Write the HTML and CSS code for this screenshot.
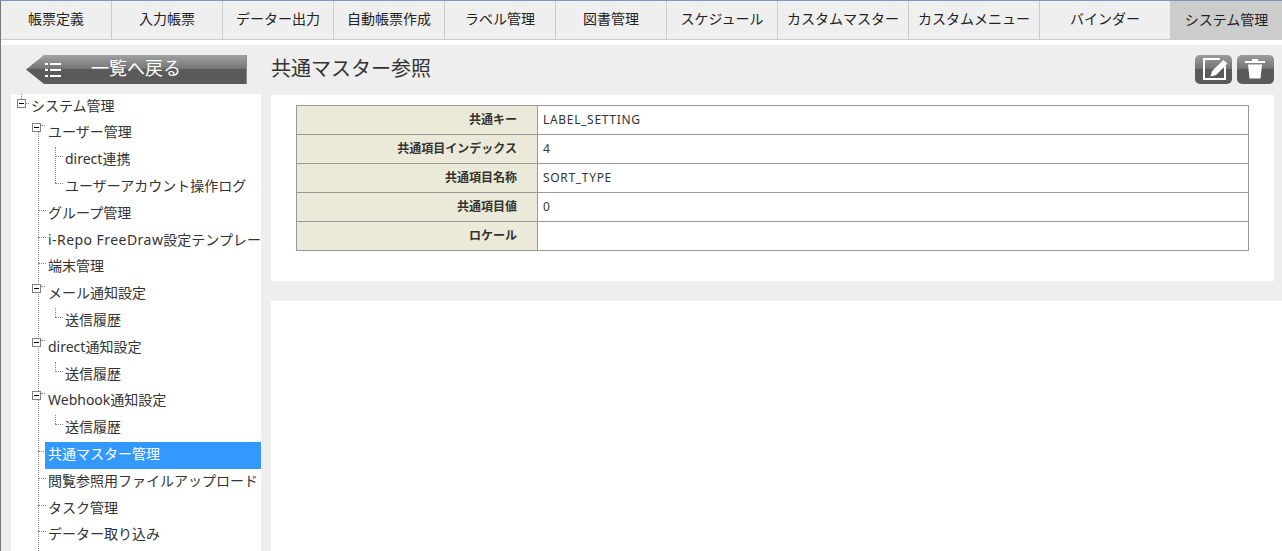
FILE: index.html
```html
<!DOCTYPE html>
<html lang="ja">
<head>
<meta charset="utf-8">
<title>共通マスター参照</title>
<link rel="stylesheet" href="styles.css">
</head>
<body>
<div class="app">
  <nav class="tabs">
    <a class="tab">帳票定義</a>
    <a class="tab">入力帳票</a>
    <a class="tab">データー出力</a>
    <a class="tab">自動帳票作成</a>
    <a class="tab">ラベル管理</a>
    <a class="tab">図書管理</a>
    <a class="tab">スケジュール</a>
    <a class="tab tab-wide">カスタムマスター</a>
    <a class="tab tab-wide">カスタムメニュー</a>
    <a class="tab tab-wide">バインダー</a>
    <a class="tab tab-active">システム管理</a>
  </nav>
  <div class="white-gap"></div>
  <div class="workspace">
    <aside class="left">
      <a class="back">
        <svg class="back-icon" width="16" height="16" viewBox="0 0 16 16">
          <path d="M0 1h3v2H0zM5 1h11v2H5zM0 7h3v2H0zM5 7h11v2H5zM0 13h3v2H0zM5 13h11v2H5z" fill="#fff"/>
        </svg>
        <span class="back-label">一覧へ戻る</span>
      </a>
      <div class="sidebar">
        <ul class="tree tree-root">
          <li class="node node-root">
            <span class="toggle"></span>
            <a class="row">システム管理</a>
            <ul class="tree tree-l1">
              <li class="node node-open">
                <span class="toggle"></span>
                <a class="row">ユーザー管理</a>
                <ul class="tree tree-l2">
                  <li class="node"><a class="row">direct連携</a></li>
                  <li class="node"><a class="row">ユーザーアカウント操作ログ</a></li>
                </ul>
              </li>
              <li class="node"><a class="row">グループ管理</a></li>
              <li class="node"><a class="row"><span class="latin">i-Repo FreeDraw</span>設定テンプレー</a></li>
              <li class="node"><a class="row">端末管理</a></li>
              <li class="node node-open">
                <span class="toggle"></span>
                <a class="row">メール通知設定</a>
                <ul class="tree tree-l2">
                  <li class="node"><a class="row">送信履歴</a></li>
                </ul>
              </li>
              <li class="node node-open">
                <span class="toggle"></span>
                <a class="row">direct通知設定</a>
                <ul class="tree tree-l2">
                  <li class="node"><a class="row">送信履歴</a></li>
                </ul>
              </li>
              <li class="node node-open">
                <span class="toggle"></span>
                <a class="row">Webhook通知設定</a>
                <ul class="tree tree-l2">
                  <li class="node"><a class="row">送信履歴</a></li>
                </ul>
              </li>
              <li class="node"><a class="row row-selected">共通マスター管理</a></li>
              <li class="node"><a class="row">閲覧参照用ファイルアップロード</a></li>
              <li class="node"><a class="row">タスク管理</a></li>
              <li class="node"><a class="row">データー取り込み</a></li>
            </ul>
          </li>
        </ul>
      </div>
    </aside>
    <main class="right">
      <header class="head">
        <h1 class="title">共通マスター参照</h1>
        <div class="actions">
          <button class="action" type="button" aria-label="編集">
            <svg width="37" height="29" viewBox="0 0 37 29">
              <path d="M30 11V24H9V4h16" fill="none" stroke="#fff" stroke-width="2"/>
              <path d="M15.500 21.500l1.500-5.500L28.500 5l4 3.500L21 20z" fill="#fff"/>
            </svg>
          </button>
          <button class="action" type="button" aria-label="削除">
            <svg width="37" height="29" viewBox="0 0 37 29">
              <path d="M15 4h6v2h7v2H8V6h7zM11 9.500h14L23.500 23.500h-11z" fill="#fff"/>
            </svg>
          </button>
        </div>
      </header>
      <section class="panel">
        <table class="detail">
          <tr><th>共通キー</th><td>LABEL_SETTING</td></tr>
          <tr><th>共通項目インデックス</th><td>4</td></tr>
          <tr><th>共通項目名称</th><td>SORT_TYPE</td></tr>
          <tr><th>共通項目値</th><td>0</td></tr>
          <tr><th>ロケール</th><td></td></tr>
        </table>
      </section>
      <section class="lower"></section>
    </main>
  </div>
</div>
</body>
</html>
```
FILE: styles.css
```css
* { box-sizing: border-box; }
html, body { margin: 0; padding: 0; height: 100%; overflow: hidden; background: #fff; }
body { font-family: "Noto Sans", "Noto Sans CJK JP", sans-serif; color: #333; }
a { color: inherit; text-decoration: none; }

.app {
  height: 551px;
  display: flex;
  flex-direction: column;
  border-left: 1px solid #777;
  border-top: 1px solid #7f95c2;
}

/* top tabs */
.tabs { display: flex; height: 39px; flex: none; background: #efefef; }
.tab {
  width: 111px;
  flex: none;
  display: flex;
  align-items: center;
  justify-content: center;
  font-size: 14px;
  color: #222;
  padding-bottom: 4px;
  border-right: 1px solid #ccc;
  border-bottom: 1px solid #ccc;
  white-space: nowrap;
}
.tab-wide { width: 131px; }
.tab-active { flex: 1; background: #ccc; border: 0; padding-bottom: 3px; }
.white-gap { height: 5px; flex: none; }

.workspace { flex: 1; min-height: 0; display: flex; background: #eee; }

/* left column */
.left { width: 260px; margin-left: 10px; flex: none; display: flex; flex-direction: column; padding-top: 10px; }
.back {
  width: 221px;
  height: 29px;
  margin-left: 15px;
  flex: none;
  display: flex;
  align-items: center;
  color: #fff;
  background: linear-gradient(#a2a2a2 0, #727272 50%, #5a5a5a 50%, #5a5a5a 100%);
  border-right: 1px solid #8a8a8a;
  clip-path: polygon(0 50%, 18px 0, 100% 0, 100% 100%, 18px 100%);
}
.back-icon { margin-left: 19px; flex: none; }
.back-label { margin-left: 30px; font-size: 18px; line-height: 29px; position: relative; top: -1px; }
.sidebar {
  margin-top: 10px;
  width: 250px;
  flex: 1;
  min-height: 0;
  background: #fff;
  overflow: hidden;
}

/* tree */
.tree { list-style: none; margin: 0; position: relative; padding: 0 0 0 17px; }
.tree-root { margin-top: -.4px; }
.tree-l1 { padding-bottom: 30px; }
.tree-l1::before {
  content: "";
  position: absolute;
  left: 10px;
  top: 12px;
  bottom: 0;
  border-left: 1px dotted #888;
}
.tree-l2::before {
  content: "";
  position: absolute;
  left: 10px;
  top: 0;
  bottom: 18px;
  border-left: 1px dotted #888;
}
.node { position: relative; }
.node::before {
  content: "";
  position: absolute;
  left: -7px;
  top: 9px;
  width: 8px;
  border-top: 1px dotted #888;
}
.node-open::before { left: -4px; top: 5px; width: 4px; }
.node-root::before { left: -3px; top: 9px; width: 4px; }
.node-root::after {
  content: "";
  position: absolute;
  left: -7px;
  top: 0;
  height: 5px;
  border-left: 1px dotted #888;
}
.row {
  display: block;
  height: 26.8px;
  line-height: 24px;
  padding-left: 3px;
  font-size: 14px;
  color: #333;
  white-space: nowrap;
}
.latin { letter-spacing: .45px; }
.row-selected { background: #3399ff; color: #fff; }
.toggle {
  position: absolute;
  left: -13px;
  top: 3px;
  width: 9px;
  height: 9px;
  background: #fff;
  border: 1px solid #808080;
  z-index: 1;
}
.toggle::after {
  content: "";
  position: absolute;
  left: 1px;
  top: 3px;
  width: 5px;
  height: 1px;
  background: #000;
}
.node-root > .toggle { left: -11px; top: 5px; }

/* right column */
.right { flex: 1; min-width: 0; display: flex; flex-direction: column; }
.head {
  height: 50px;
  flex: none;
  display: flex;
  justify-content: space-between;
  padding: 11px 8px 0 0;
}
.title { margin: 0; font-size: 20px; font-weight: 400; line-height: 26px; color: #333; }
.actions { display: flex; gap: 5px; margin-top: -1px; align-self: flex-start; }
.action {
  width: 37px;
  height: 29px;
  padding: 0;
  border: 0;
  border-radius: 5px;
  background: linear-gradient(#9c9c9c 0, #727272 50%, #5a5a5a 50%, #5a5a5a 100%);
}
.action svg { display: block; }
.panel {
  flex: none;
  height: 186px;
  margin-right: 8px;
  padding: 10px 25px 0 25px;
  background: #fff;
}
.detail { width: 100%; border-collapse: collapse; font-size: 12px; }
.detail th, .detail td { height: 29px; border: 1px solid #999; padding: 0; line-height: 16px; }
.detail th {
  width: 241px;
  background: #ebe9d8;
  text-align: right;
  padding-right: 20px;
  font-weight: 700;
  color: #333;
}
.detail td { padding-left: 5px; color: #333; letter-spacing: .68px; }
.lower { flex: 1; margin-top: 20px; background: #fff; }
```
